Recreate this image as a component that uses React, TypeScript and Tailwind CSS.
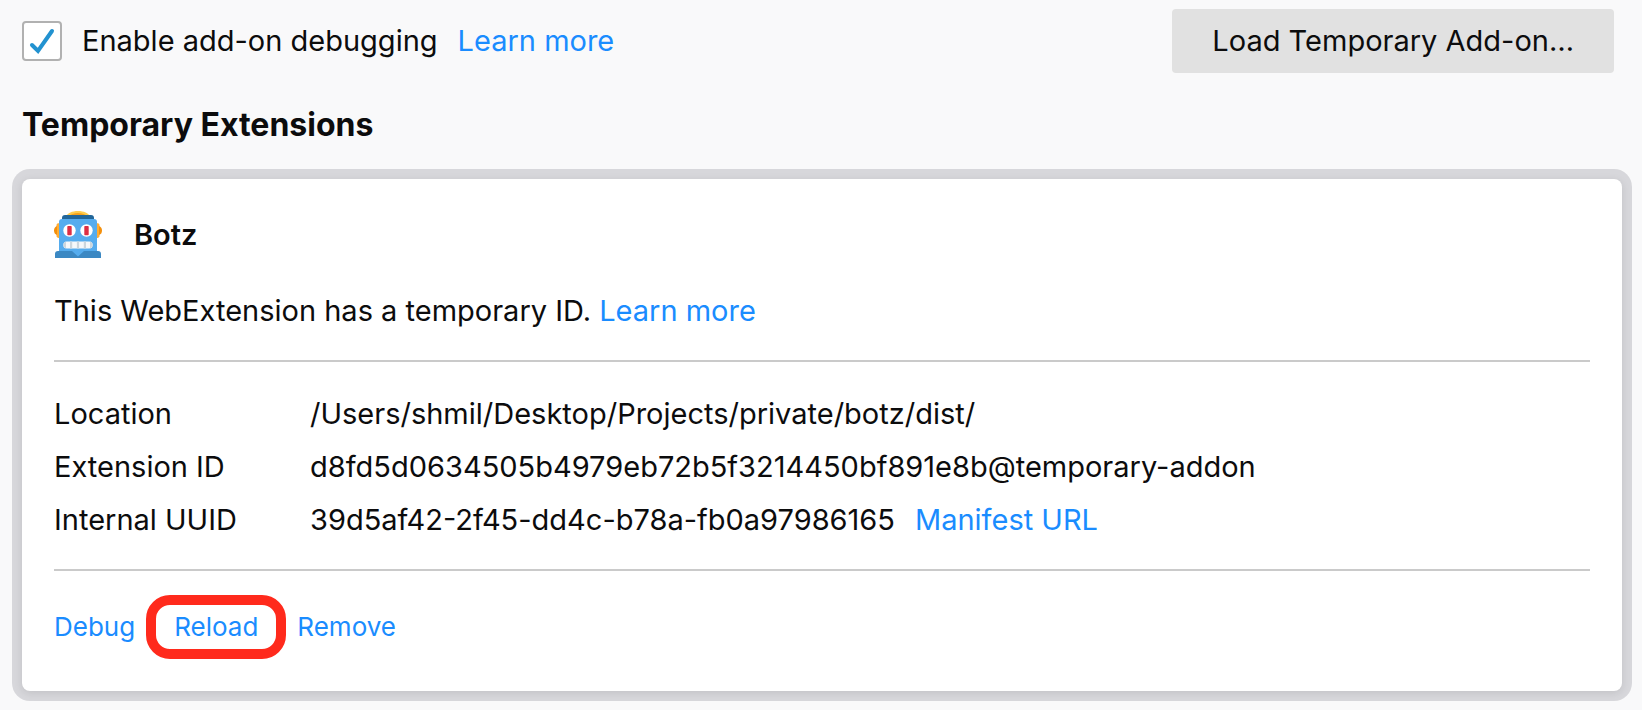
import { useState } from "react";
import type { ReactNode } from "react";

function TextLink({ href, children }: { href: string; children: ReactNode }) {
  return (
    <a href={href} className="text-[#1a8cff] hover:underline">
      {children}
    </a>
  );
}

function RobotIcon() {
  return (
    <svg viewBox="0 0 48 48" className="size-12 shrink-0" aria-hidden="true">
      <path fill="#FFAC33" d="M2.500 14 Q2.500 12 6 12 V27 Q2.500 27 2.500 25Z M45.500 14 Q45.500 12 42 12 V27 Q45.500 27 45.500 25Z" />
      <path fill="#F4900C" d="M3 15 Q0 16 0 19.500 T3 24Z M45 15 Q48 16 48 19.500 T45 24Z" />
      <path fill="#FFCC4D" d="M11 6 C14 2 18 0 24 0 S34 2 37 6Z" />
      <path fill="#F4A01C" d="M14 6 C17 3 20 2 24 2 S31 3 34 6Z" />
      <path fill="#226699" d="M8 9 V7 Q8 4 11 4 H37 Q40 4 40 7 V9Z" />
      <path fill="#55ACEE" d="M5 46.500 V11 Q5 8 8 8 H40 Q43 8 43 11 V46.500Z" />
      <path fill="#3B88C3" d="M1 47 V43 Q1 40 4 40 H18 L24 45.500 L30 40 H44 Q47 40 47 43 V47Z" />
      <circle fill="#FFF" cx="15.500" cy="19.500" r="6.200" />
      <circle fill="#FFF" cx="32.500" cy="19.500" r="6.200" />
      <rect fill="#DD2E44" x="13.300" y="15" width="4.400" height="9.200" rx=".8" />
      <rect fill="#DD2E44" x="30.300" y="15" width="4.400" height="9.200" rx=".8" />
      <rect fill="#F5F8FA" x="9.300" y="30.500" width="29.400" height="7" rx="3.500" />
      <path fill="#CCD6DD" d="M16 30.500h2.200v7H16z M22.900 30.500h2.200v7h-2.200z M29.800 30.500H32v7h-2.200z M12 30.600v6.800q-2.700-.8-2.700-3.400t2.700-3.400z M36 30.600v6.800q2.700-.8 2.700-3.400t-2.700-3.400z" />
    </svg>
  );
}

const actionClass = "text-[26px] leading-8 text-[#1a8cff] hover:underline";

export default function App() {
  const [debugging, setDebugging] = useState(true);

  return (
    <main className="min-h-screen bg-[#f9f9fa] px-[22px] pt-[9px] pb-4 font-['Inter',sans-serif] text-[29px] leading-9 text-[#0c0c0d]">
      <header className="flex items-center justify-between pr-1.5">
        <div className="flex items-center gap-5">
          <span className="relative flex size-10">
            <input
              id="debugging"
              type="checkbox"
              checked={debugging}
              onChange={(e) => setDebugging(e.target.checked)}
              className="size-10 appearance-none rounded-[4px] border-2 border-[#b1b1b1] bg-white"
            />
            {debugging && (
              <svg viewBox="0 0 40 40" className="pointer-events-none absolute inset-0" aria-hidden="true">
                <path d="M10 24 L16 30 L30 10" fill="none" stroke="#2292d0" strokeWidth="4" strokeLinecap="round" strokeLinejoin="miter" />
              </svg>
            )}
          </span>
          <label htmlFor="debugging">Enable add-on debugging</label>
          <TextLink href="#debugging-help">Learn more</TextLink>
        </div>
        <button type="button" className="h-16 rounded-[4px] bg-[#e1e1e1] px-10">
          Load Temporary Add-on…
        </button>
      </header>

      <h1 className="mt-7 text-[32px] leading-12 font-bold">Temporary Extensions</h1>

      <section className="mt-[30px] -mr-0.5 rounded-[8px] bg-white px-8 pt-8 pb-12 shadow-[0_2px_8px_rgba(12,12,13,0.1),0_0_0_10px_#d7d7db]">
        <div className="flex items-center gap-8">
          <RobotIcon />
          <h2 className="font-semibold">Botz</h2>
        </div>
        <p className="mt-[34px]">
          This WebExtension has a temporary ID. <TextLink href="#temporary-id">Learn more</TextLink>
        </p>

        <dl className="mt-[31px] grid grid-cols-[256px_1fr] gap-y-[17px] border-y-2 border-[#cacaca] pt-[34px] pb-[31px]">
          <dt>Location</dt>
          <dd>/Users/shmil/Desktop/Projects/private/botz/dist/</dd>
          <dt>Extension ID</dt>
          <dd>d8fd5d0634505b4979eb72b5f3214450bf891e8b@temporary-addon</dd>
          <dt>Internal UUID</dt>
          <dd className="flex gap-5">
            39d5af42-2f45-dd4c-b78a-fb0a97986165
            <TextLink href="#manifest">Manifest URL</TextLink>
          </dd>
        </dl>

        <div className="mt-10 flex gap-[39px]">
          <button type="button" className={actionClass}>Debug</button>
          <span className="relative flex">
            <button type="button" className={actionClass}>Reload</button>
            <span className="pointer-events-none absolute -inset-x-7 -inset-y-4 rounded-[24px] border-10 border-[#ff2a1c]" />
          </span>
          <button type="button" className={actionClass}>Remove</button>
        </div>
      </section>
    </main>
  );
}
